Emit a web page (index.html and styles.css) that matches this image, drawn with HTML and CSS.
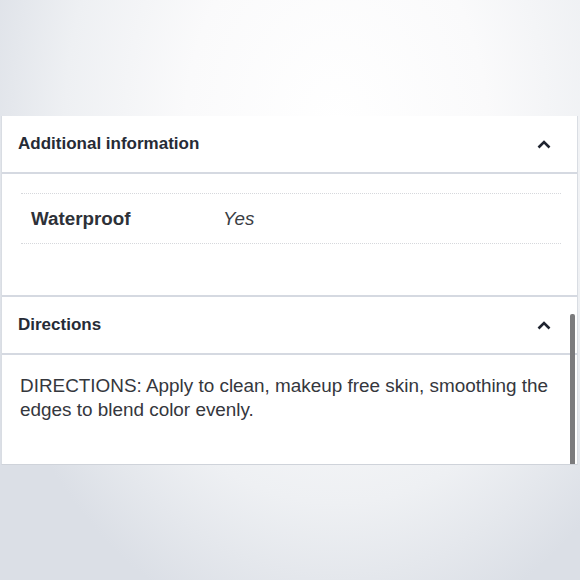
FILE: index.html
```html
<!DOCTYPE html>
<html>
<head>
<meta charset="utf-8">
<link rel="stylesheet" href="styles.css">
</head>
<body>
<div class="page">
  <div class="panel">
    <section class="acc">
      <div class="acc-head">
        <span class="acc-title">Additional information</span>
        <svg class="chev" width="14" height="9" viewBox="0 0 14 9"><path d="M1.5 7.5 L7 2 L12.5 7.5" fill="none" stroke="#1f2430" stroke-width="2.6"/></svg>
      </div>
      <div class="acc-body info">
        <div class="row">
          <span class="label">Waterproof</span>
          <span class="value">Yes</span>
        </div>
      </div>
    </section>
    <section class="acc">
      <div class="acc-head">
        <span class="acc-title">Directions</span>
        <svg class="chev" width="14" height="9" viewBox="0 0 14 9"><path d="M1.5 7.5 L7 2 L12.5 7.5" fill="none" stroke="#1f2430" stroke-width="2.6"/></svg>
      </div>
      <div class="acc-body text">
        DIRECTIONS: Apply to clean, makeup free skin, smoothing the edges to blend color evenly.
      </div>
    </section>
    <div class="scrollbar"></div>
  </div>
</div>
</body>
</html>
```
FILE: styles.css
```css
html, body {
  margin: 0;
  padding: 0;
}
body {
  width: 580px;
  height: 580px;
  overflow: hidden;
  font-family: "Liberation Sans", Arial, sans-serif;
  background: radial-gradient(ellipse 65% 90% at 58% 22%, #ffffff 0%, #fafafb 40%, #eef0f3 72%, #dbdfe6 100%);
}
.page {
  padding-top: 116px;
  padding-left: 1px;
}
.panel {
  position: relative;
  width: 575px;
  background: #ffffff;
  border-left: 1px solid #d9dde3;
  border-right: 1px solid #d9dde3;
  border-bottom: 1px solid #cfd3da;
}
.acc + .acc {
  border-top: 2px solid #d5d9e1;
}
.acc-head {
  height: 56px;
  display: flex;
  align-items: center;
  justify-content: space-between;
  padding: 0 26px 0 16px;
  border-bottom: 2px solid #d5d9e1;
}
.acc-title {
  font-size: 17px;
  font-weight: bold;
  color: #262b36;
}
.chev {
  display: block;
}
.info {
  padding: 19px 16px 51px 19px;
}
.row {
  display: flex;
  align-items: center;
  height: 49px;
  border-top: 1px dotted #d6d8dc;
  border-bottom: 1px dotted #d6d8dc;
}
.label {
  width: 192px;
  padding-left: 10px;
  font-size: 18.8px;
  font-weight: bold;
  color: #2e3138;
}
.value {
  font-size: 18.8px;
  font-style: italic;
  color: #3a3d44;
}
.text {
  padding: 19px 20px 42px 18px;
  font-size: 18.9px;
  line-height: 24px;
  color: #35373d;
}
.scrollbar {
  position: absolute;
  right: 2px;
  bottom: 0;
  width: 5px;
  height: 150px;
  background: #7b7b7d;
  border-radius: 2px 2px 0 0;
}
```
